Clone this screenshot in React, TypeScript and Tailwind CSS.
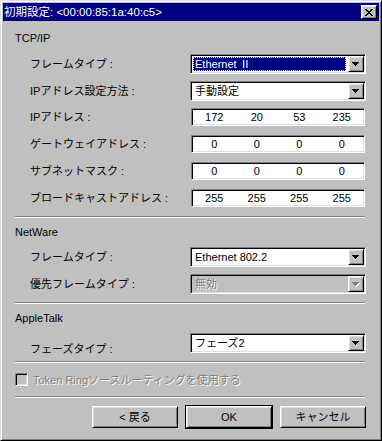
import React from "react";

const sunken =
  "border border-t-[#808080] border-l-[#808080] border-r-white border-b-white p-px shadow-[inset_1px_1px_0_#000,inset_-1px_-1px_0_#dfdfdf]";
const raised =
  "border border-t-white border-l-white border-r-black border-b-black shadow-[inset_1px_1px_0_#dfdfdf,inset_-1px_-1px_0_#808080]";
const grayText = "text-[#808080] [text-shadow:1px_1px_0_#fff]";

function Arrow({ disabled }: { disabled?: boolean }) {
  const fill = disabled ? "#808080" : "#000";
  return (
    <div className={`flex w-[16px] items-center justify-center bg-[#c0c0c0] ${raised}`}>
      <svg width="8" height="5" viewBox="0 0 8 5" shapeRendering="crispEdges">
        {disabled && (
          <>
            <rect x="1" y="1" width="7" height="1" fill="#fff" />
            <rect x="2" y="2" width="5" height="1" fill="#fff" />
            <rect x="3" y="3" width="3" height="1" fill="#fff" />
            <rect x="4" y="4" width="1" height="1" fill="#fff" />
          </>
        )}
        <rect x="0" y="0" width="7" height="1" fill={fill} />
        <rect x="1" y="1" width="5" height="1" fill={fill} />
        <rect x="2" y="2" width="3" height="1" fill={fill} />
        <rect x="3" y="3" width="1" height="1" fill={fill} />
      </svg>
    </div>
  );
}

function Combo({
  value,
  selected,
  disabled,
}: {
  value: string;
  selected?: boolean;
  disabled?: boolean;
}) {
  return (
    <div
      className={`flex h-[20px] w-[176px] ${sunken} ${disabled ? "bg-[#c0c0c0]" : "bg-white"}`}
    >
      <div className="flex flex-1 items-center py-px pl-px pr-[2px]">
        {selected ? (
          <div className="flex h-full flex-1 items-center border border-dotted border-[#ffff80] bg-[#000080] pl-px text-white">
            {value}
          </div>
        ) : (
          <div className={`pl-[2px] ${disabled ? grayText : "text-black"}`}>{value}</div>
        )}
      </div>
      <Arrow disabled={disabled} />
    </div>
  );
}

function IpField({ parts }: { parts: string[] }) {
  return (
    <div className={`ml-px grid h-[18px] w-[174px] grid-cols-4 items-center bg-white ${sunken}`}>
      {parts.map((p, i) => (
        <div key={i} className="text-center">
          {p}
        </div>
      ))}
    </div>
  );
}

function Row({
  label,
  children,
  className,
  labelClass,
}: {
  label: string;
  children: React.ReactNode;
  className: string;
  labelClass?: string;
}) {
  return (
    <div className={`flex items-center ${className}`}>
      <div className={`w-[175px] pl-[15px] ${labelClass ?? ""}`}>{label}</div>
      {children}
    </div>
  );
}

function Separator({ className }: { className: string }) {
  return <div className={`h-[2px] w-[350px] border-t border-b border-t-[#808080] border-b-white ${className}`} />;
}

function Button({ label, isDefault }: { label: string; isDefault?: boolean }) {
  const inner = (
    <div className={`flex h-[22px] w-[86px] items-center justify-center bg-[#c0c0c0] ${raised}`}>
      {label}
    </div>
  );
  if (isDefault) {
    return <div className="-my-px border border-black">{inner}</div>;
  }
  return inner;
}

export default function App() {
  return (
    <div className="h-[441px] w-[382px] bg-white font-['Liberation_Sans','Noto_Sans_CJK_JP',sans-serif] text-[11px] leading-[14px] text-black">
      <div className="flex h-full w-full flex-col border border-t-[#dfdfdf] border-l-[#dfdfdf] border-r-black border-b-black bg-[#c0c0c0] p-[2px] shadow-[inset_1px_1px_0_#fff,inset_-1px_-1px_0_#808080]">
        {/* title bar */}
        <div className="flex h-[18px] items-center justify-between bg-[#000080] pl-px text-[11.5px] text-white">
          <span>初期設定: &lt;00:00:85:1a:40:c5&gt;</span>
          <div className={`mr-[2px] flex h-[14px] w-[16px] items-center justify-center bg-[#c0c0c0] ${raised}`}>
            <svg width="8" height="7" viewBox="0 0 8 7" shapeRendering="crispEdges">
              <path
                d="M0 0h2v1h-2zM6 0h2v1h-2zM1 1h2v1h-2zM5 1h2v1h-2zM2 2h4v1h-4zM3 3h2v1h-2zM2 4h4v1h-4zM1 5h2v1h-2zM5 5h2v1h-2zM0 6h2v1h-2zM6 6h2v1h-2z"
                fill="#000"
              />
            </svg>
          </div>
        </div>

        {/* body */}
        <div className="flex flex-col pl-[12px]">
          <div className="mt-[10px] h-[14px]">TCP/IP</div>
          <Row label="フレームタイプ :" className="mt-[9px]">
            <Combo value="Ethernet Ⅱ" selected />
          </Row>
          <Row label="IPアドレス設定方法 :" className="mt-[7px]">
            <Combo value="手動設定" />
          </Row>
          <Row label="IPアドレス :" className="mt-[7px]">
            <IpField parts={["172", "20", "53", "235"]} />
          </Row>
          <Row label="ゲートウェイアドレス :" className="mt-[9px]">
            <IpField parts={["0", "0", "0", "0"]} />
          </Row>
          <Row label="サブネットマスク :" className="mt-[9px]">
            <IpField parts={["0", "0", "0", "0"]} />
          </Row>
          <Row label="ブロードキャストアドレス :" className="mt-[9px]">
            <IpField parts={["255", "255", "255", "255"]} />
          </Row>
          <Separator className="mt-[9px]" />

          <div className="mt-[7px] h-[14px]">NetWare</div>
          <Row label="フレームタイプ :" className="mt-[8px]">
            <Combo value="Ethernet 802.2" />
          </Row>
          <Row label="優先フレームタイプ :" className="mt-[7px]">
            <Combo value="無効" disabled />
          </Row>
          <Separator className="mt-[8px]" />

          <div className="mt-[7px] h-[14px]">AppleTalk</div>
          <Row label="フェーズタイプ :" className="mt-[8px]" labelClass="translate-y-[6px]">
            <Combo value="フェーズ2" />
          </Row>
          <Separator className="mt-[8px]" />

          <div className="mt-[10px] flex h-[13px] items-center gap-[5px]">
            <div className={`h-[13px] w-[13px] bg-[#c0c0c0] ${sunken}`} />
            <span className={grayText}>Token Ringソースルーティングを使用する</span>
          </div>
          <Separator className="mt-[10px]" />

          <div className="mt-[8px] flex w-[351px] items-center justify-end gap-[7px]">
            <Button label="< 戻る" />
            <Button label="OK" isDefault />
            <Button label="キャンセル" />
          </div>
        </div>
      </div>
    </div>
  );
}
